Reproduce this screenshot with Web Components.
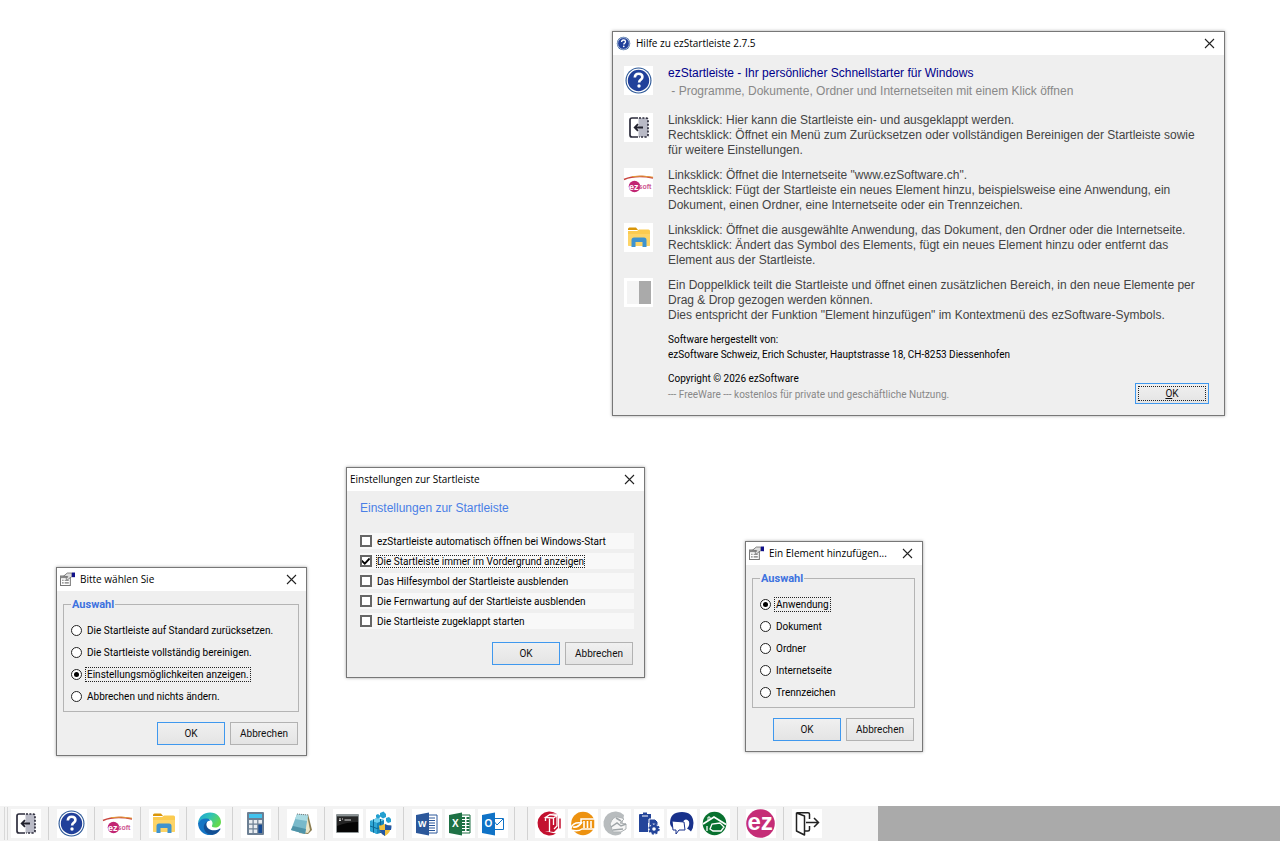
<!DOCTYPE html>
<html lang="de">
<head>
<meta charset="utf-8">
<title>ezStartleiste</title>
<style>
  html, body { margin: 0; min-height: 100vh; background: #fff; }
  body {
    --title: "Open Sans", "Noto Sans", sans-serif;
    --ui: Roboto, "Liberation Sans", sans-serif;
    --text: "Liberation Sans", Arial, sans-serif;
    font-family: var(--ui); font-size: 10px; line-height: 15px; color: #000;
  }
</style>
</head>
<body>
<ez-desktop>
  <ez-window style="left:612px;top:31px;width:611px" icon="help" caption="Hilfe zu ezStartleiste 2.7.5">
    <ez-help></ez-help>
  </ez-window>
  <ez-window style="left:346px;top:467px;width:297px" caption="Einstellungen zur Startleiste">
    <ez-settings heading="Einstellungen zur Startleiste" checked="1"
      options="ezStartleiste automatisch öffnen bei Windows-Start|Die Startleiste immer im Vordergrund anzeigen|Das Hilfesymbol der Startleiste ausblenden|Die Fernwartung auf der Startleiste ausblenden|Die Startleiste zugeklappt starten"></ez-settings>
    <ez-actions roomy></ez-actions>
  </ez-window>
  <ez-window style="left:56px;top:567px;width:249px" icon="form" caption="Bitte wählen Sie">
    <ez-radio-group legend="Auswahl" checked="2"
      options="Die Startleiste auf Standard zurücksetzen.|Die Startleiste vollständig bereinigen.|Einstellungsmöglichkeiten anzeigen.|Abbrechen und nichts ändern."></ez-radio-group>
    <ez-actions></ez-actions>
  </ez-window>
  <ez-window style="left:745px;top:541px;width:176px" icon="form" caption="Ein Element hinzufügen...">
    <ez-radio-group legend="Auswahl" checked="0" options="Anwendung|Dokument|Ordner|Internetseite|Trennzeichen"></ez-radio-group>
    <ez-actions></ez-actions>
  </ez-window>
  <ez-bar slot="bar"></ez-bar>
</ez-desktop>

<script>
const ICONS = {
  collapse: `<path d="M14.500 5h7.500q2 0 2 2v15q0 2-2 2h-7.500z" fill="#b9bac6"/><path d="M14 5H8Q6 5 6 7v15q0 2 2 2h6" fill="none" stroke="#2d2d3c" stroke-width="1.700"/><path d="M15 5h7q2 0 2 2v15q0 2-2 2h-7" fill="none" stroke="#2d2d3c" stroke-width="1.700" stroke-dasharray="2 1.400"/><path d="M19 14.500h-8M14 11.200l-3.300 3.300L14 17.800" fill="none" stroke="#22222e" stroke-width="1.800"/>`,
  help: `<circle cx="14.500" cy="14.500" r="13" fill="#2b5797"/><circle cx="14.500" cy="14.500" r="11.300" fill="#21409a" stroke="#fff" stroke-width="1.200"/><path d="M10.800 11.500q.2-3.700 3.900-3.700 3.700 0 3.700 3.200 0 1.600-1.600 2.700-1.600 1-1.700 2.800" fill="none" stroke="#fff" stroke-width="2.600"/><circle cx="15" cy="20" r="1.700" fill="#fff"/>`,
  ezsoft: `<path d="M0 11.500Q12 6.500 29 10" fill="none" stroke="#c8443d" stroke-width="1.500"/><path d="M8 8.600Q18 7.200 29 9.200" fill="none" stroke="#e39a3a" stroke-width="1"/><circle cx="10.500" cy="18.500" r="5.800" fill="#c22673"/><text x="5" y="21.500" font-family="Liberation Sans" font-size="9" font-weight="700" fill="#fff">ez</text><text x="14.500" y="21" font-family="Liberation Sans" font-size="7" font-weight="700" fill="#cf5a94">soft</text>`,
  folder: `<path d="M4 6q0-1.500 1.500-1.500H12l2 2.500H4z" fill="#d99508"/><path d="M4 8h9l2-1.500h9.500q1.500 0 1.500 1.500v13.500q0 1.500-1.500 1.500h-19Q4 23 4 21.500z" fill="#fbcb50"/><path d="M4 11h22v10.500q0 1.500-1.500 1.500h-19Q4 23 4 21.500z" fill="#fdd467"/><path d="M7.500 24v-7q0-2.500 2.500-2.500h10q2.500 0 2.500 2.500v7h-4v-5h-7v5z" fill="#3f93cf"/>`,
  edge: `<defs><linearGradient id="g" x1="0" y1="0" x2="1" y2=".5"><stop offset="0" stop-color="#1e9fd8"/><stop offset=".5" stop-color="#2fc2b8"/><stop offset="1" stop-color="#63d94f"/></linearGradient></defs><path d="M3 14C4 7 9 3.500 15 3.500c7 0 11 5 11 9.500 0 3.500-2.500 5.500-6 5.500-2.500 0-3.500-1-3-2 1.500-2.500 0-6-4-6.500-4-.4-8 1-10 4z" fill="url(#g)"/><path d="M3 14c2-4 6-5 9-4.500 2 .3 3 1.200 3.500 2-4 .5-5.500 3.500-4.500 7 1 3.500 4.500 6 8 7-8 2.500-16-3-16-11.500z" fill="#1475c4"/><path d="M12.500 12.500c-2 2-1 6 1.500 7.500 3 2 7.500 1.500 10.500-.3.800-.5 1.200 0 .8.700-2.300 4.200-6.500 5.800-9.800 5.100-5-1-7.500-5.500-6.500-9 .5-1.700 1.800-3.300 3.500-4z" fill="#124f94"/>`,
  calc: `<rect x="6" y="3" width="17" height="23" rx="1" fill="#6c7f93"/><rect x="8" y="5" width="13" height="4" fill="#42c3ee"/><g fill="#e8ecf0"><path d="M8 11h3.500v3.500H8zM12.700 11h3.500v3.500h-3.500zM17.400 11H21v3.500h-3.600zM8 15.700h3.500v3.500H8zM12.700 15.700h3.500v3.500h-3.500zM8 20.400h3.500V24H8zM12.700 20.400h3.500V24h-3.500z"/></g><path d="M17.400 15.700H21V24h-3.600z" fill="#164a93"/>`,
  note: `<path d="M21 5l4 16-4 4-9-1z" fill="#8b7d50"/><path d="M20 6l3 15-2 3-8-1z" fill="#eee5c6"/><path d="M10 5l11 1-3 19-14-4z" fill="#79b9ca"/><path d="M10 5l11 1-1 6-12-2z" fill="#aadbe3"/><path d="M6 17l13 3-1 5-14-4z" fill="#4f93a8"/><path d="M10 5l11 1" stroke="#777" stroke-dasharray="1 1"/>`,
  cmd: `<rect x="3" y="5" width="23" height="19" rx="1" fill="#8d9496"/><rect x="4" y="7.500" width="21" height="15.500" fill="#050505"/><path d="M4 8h21v5Q14 13 4 17z" fill="#252525"/><path d="M6 10h2m1 0h1m1.500 1H18M6 11.500h2" stroke="#ddd"/>`,
  reg: `<path d="M4 12l7-3 7 2v12l-7 2-7-3z" fill="#1886ba"/><path d="M4 12l7-3 7 2-7 3z" fill="#6ed0ef"/><path d="M11 14v11l-7-3V12z" fill="#2fa7d6"/><path d="M4 17l7 2.500 7-2M7.500 10.500v13M14.500 10v14" stroke="#0b6793" fill="none"/><path d="M14 4l3.500-1.500L20 5v3l-3 1.500-3-2zM20 9l3-1 2 2v3l-3 1-2-2zM10 6l2-1 2 1.500v2l-2 1-2-1z" fill="#24a0d0"/><path d="M18 15q-3 2-5 1.500 0 7 6 10.500 6-3.500 6-10.500-4 .5-7-1.500z" fill="#f0c040"/><path d="M19 15v6h6q.5-2 .5-4.500-4 0-6.500-1.500zM19 27v-6h-5.500q1.500 4 5.500 6z" fill="#2257a5"/>`,
  word: `<path d="M13 6h12v18H13z" fill="#fff" stroke="#2b579a"/><path d="M16 9h7m-7 2.500h7M16 14h7m-7 2.500h7M16 19h7m-7 2.500h7" stroke="#2b579a"/><path d="M4 6l13-2.500v23L4 24z" fill="#2b579a"/><text x="6" y="18" font-family="Liberation Sans" font-size="9" font-weight="700" fill="#fff">W</text>`,
  excel: `<path d="M13 6h12v18H13z" fill="#fff" stroke="#1e7145"/><path d="M17 9h3m1.500 0h3M17 12h3m1.500 0h3M17 15h3m1.500 0h3M17 18h3m1.500 0h3M17 21h3m1.500 0h3" stroke="#1e7145" stroke-width="2"/><path d="M4 6l13-2.500v23L4 24z" fill="#1e7145"/><text x="7" y="18" font-family="Liberation Sans" font-size="10" font-weight="700" fill="#fff">X</text>`,
  outlook: `<path d="M13 9.500h12.500v11H13z" fill="#fff" stroke="#0f72c6"/><path d="M15 11l4 5 6-6" stroke="#0f72c6" fill="none"/><path d="M4 6l13-2.500v23L4 24z" fill="#0f72c6"/><text x="6.500" y="18" font-family="Liberation Sans" font-size="10" font-weight="700" fill="#fff">O</text>`,
  shelf: `<path d="M21 24.500A12 12 0 1 1 22 5l-3-.5-4 .5-5 3v14l8 2z" fill="#c3112f"/><path d="M10 8l5-3 8 1v13l-4 4-9-1z" fill="#c3112f"/><path d="M10.500 8.500l4.500-3 7 1-3.500 2.500zM14.500 9v14M18.500 9v7M22 7v10l-3 3M10.500 9v3" fill="none" stroke="#fff" stroke-width="1.300"/><path d="M25 9.500v10" stroke="#c3112f" stroke-width="1.500"/>`,
  book: `<circle cx="15" cy="14.500" r="11.800" fill="#ed9210"/><path d="M3 19q2-6 10-5V10h14v10H14q-4 3-11 1z" fill="#ed9210" stroke="#fff" stroke-width="1.500"/><path d="M16 12v7M19.500 12v7M23 12v7M5 18q5 1 9-5" stroke="#fff" stroke-width="1.600" fill="none"/>`,
  people: `<path d="M20 25A12 12 0 1 1 23 6" fill="#b8bcbe"/><path d="M9 15q3-8 8-7t6 2l-4 4 6 1v5l-5 3-8 0z" fill="#f6f6f6" stroke="#aeb3b5"/><path d="M10 18l6-4 4 3 5-2M12 21l10-1M15 9l5 3" stroke="#9fa5a8" fill="none" stroke-width="1.500"/>`,
  clip: `<path d="M6 5h3V3.500h4V5h4v9h-3v9H5V6q0-1 1-1z" fill="#24459a"/><path d="M15 10h6l3 3v6h-9z" fill="#24459a" stroke="#fff"/><circle cx="20" cy="20" r="5" fill="#24459a" stroke="#fff"/><circle cx="20" cy="20" r="4.700" fill="none" stroke="#24459a" stroke-width="2" stroke-dasharray="2 1.700"/><circle cx="20" cy="20" r="1.800" fill="#fff"/><path d="M8 7h6" stroke="#fff"/>`,
  chat: `<path d="M3 14Q3 3 15 3q11 0 11.500 11 0 5-2.500 8.500-2-2-4-3 3-3 2-7-3-4-6 0-1 3 1 6H5q-2-2-2-4.500z" fill="#18318b"/><path d="M5 12l12 1 1 8h-6l-3 4v-4H6z" fill="#fff" stroke="#18318b"/>`,
  house: `<circle cx="14.500" cy="14.500" r="11.800" fill="#08712f"/><path d="M3 15L14 8l12 7.500" fill="none" stroke="#fff" stroke-width="1.800"/><path d="M7 17v5M10 20l2-5 8-1 4 4-3 4h-8z" fill="#08712f" stroke="#fff" stroke-width="1.300"/><path d="M8 11V8h2v2" stroke="#fff" fill="none"/>`,
  ez: `<circle cx="14.500" cy="14.500" r="14.300" fill="#c52d77"/><text x="1.500" y="20.500" font-family="Liberation Sans" font-size="24" font-weight="700" fill="#fff">ez</text>`,
  exit: `<path d="M4.500 4l8 3v19l-8-4zM5 3.800h11q1.500 0 1.500 1.500V10M13 22h3q1.500 0 1.500-1.500V17" fill="none" stroke="#222" stroke-width="1.500" stroke-linejoin="round"/><path d="M14 13.500h12.500M22 9l4.500 4.500L22 18" fill="none" stroke="#222" stroke-width="1.500"/>`,
  split: `<path d="M3 3h12v23H3z" fill="#f4f4f4"/><path d="M15 3h12v23H15z" fill="#aaa"/>`,
  form: `<path d="M1 8h19v18H1z" fill="#fff" stroke="#777" stroke-width="2"/><path d="M1 8h19v4H1z" fill="#888"/><path d="M4 16h3m2 0h8M4 21h3m2 0h8" stroke="#777" stroke-width="2"/><path d="M7 8l7-6h9v7l-5 3-4 4-2-3 3-4z" fill="#ddd" stroke="#666" stroke-width="1.500"/><path d="M23 1h6v9h-6z" fill="#11118a"/>`
};

class EzElement extends HTMLElement {
  connectedCallback() {
    if (!this.shadowRoot) this.attachShadow({ mode: "open" }).innerHTML = this.render();
  }
  attr(name) { return this.getAttribute(name) || ""; }
  options() { return this.attr("options").split("|"); }
}

customElements.define("ez-icon", class extends EzElement {
  render() {
    return `<style>:host{display:block;width:29px;height:29px;flex:none}svg{display:block;width:100%;height:100%;overflow:visible}</style>
      <svg viewBox="0 0 29 29" aria-hidden="true">${ICONS[this.attr("name")]}</svg>`;
  }
});

customElements.define("ez-desktop", class extends EzElement {
  render() {
    return `<style>
      :host{display:flex;flex-direction:column;min-height:100vh}
      main{position:relative;flex:1;min-height:760px}
      </style><main><slot></slot></main><slot name="bar"></slot>`;
  }
});

customElements.define("ez-window", class extends EzElement {
  render() {
    const icon = this.attr("icon");
    return `<style>
      :host{display:block;position:absolute;border:1px solid #777;background:#efefef;box-shadow:0 0 3px rgba(0,0,0,.35)}
      header{display:flex;align-items:center;gap:5px;height:23px;padding:0 9px 0 3px;background:#fff}
      h1{flex:1;margin:0;font:10px/15px var(--title);color:#000;white-space:nowrap}
      ez-icon{width:15px;height:15px}
      button{all:unset;display:block;width:11px;height:11px}
      svg{display:block}
      </style>
      <header>${icon ? `<ez-icon name="${icon}"></ez-icon>` : ""}<h1>${this.attr("caption")}</h1>
      <button type="button" aria-label="Schließen"><svg width="11" height="11" viewBox="0 0 11 11"><path d="M1 1l9 9M10 1l-9 9" stroke="#222" stroke-width="1.100"/></svg></button></header>
      <slot></slot>`;
  }
});

customElements.define("ez-button", class extends EzElement {
  render() {
    return `<style>
      :host{display:block;width:68px}
      button{display:flex;align-items:center;justify-content:center;box-sizing:border-box;width:100%;height:23px;padding:0;border:1px solid #b2b2b2;
        background:linear-gradient(#f0f0f0,#e4e4e4);font:inherit;color:#111}
      :host([primary]) button{border-color:#3f98ee}
      :host([focused]) button{height:21px;outline:1px dotted #222;outline-offset:-4px}
      </style><button type="button"><span><slot></slot></span></button>`;
  }
});

customElements.define("ez-actions", class extends EzElement {
  render() {
    return `<style>:host{display:flex;justify-content:flex-end;gap:5px;padding:10px 8px}:host([roomy]){padding:11px 11px 12px}</style>
      <ez-button primary>OK</ez-button><ez-button>Abbrechen</ez-button>`;
  }
});

customElements.define("ez-settings", class extends EzElement {
  render() {
    const on = +this.attr("checked");
    return `<style>
      :host{display:block;padding:9px 10px 2px 13px}
      h2{margin:0 0 17px;font:12px/16px var(--text);color:#4a7fe6}
      div{display:grid;gap:4px}
      label{display:flex;align-items:center;gap:4px;height:16px;background:#f8f8f8}
      input{appearance:none;flex:none;box-sizing:border-box;width:12px;height:12px;margin:0;border:2px solid #666;background:#fff}
      input:checked::before{content:"";display:block;width:8px;height:8px;background:#000;clip-path:polygon(0 35%,35% 65%,90% 5%,100% 30%,35% 100%,0 65%)}
      span{line-height:13px;padding:0 1px;white-space:nowrap}
      input:checked + span{outline:1px dotted #222;outline-offset:-1px}
      </style><h2>${this.attr("heading")}</h2><div>
      ${this.options().map((t, i) => `<label><input type="checkbox"${i === on ? " checked" : ""}><span>${t}</span></label>`).join("")}</div>`;
  }
});

customElements.define("ez-radio-group", class extends EzElement {
  render() {
    const on = +this.attr("checked");
    return `<style>
      :host{display:block;padding:6px 7px 0 6px}
      fieldset{margin:0;min-width:0;padding:7px 7px 4px;border:1px solid #b4b4b4}
      legend{padding:0 1px;margin:0;font-size:11px;font-weight:700;color:#3d72df;line-height:15px}
      label{display:flex;align-items:center;gap:4px;height:22px}
      input{appearance:none;display:grid;place-items:center;flex:none;box-sizing:border-box;width:11px;height:11px;margin:0;border:1px solid #222;border-radius:50%;background:#fff}
      input:checked::before{content:"";width:5px;height:5px;border-radius:50%;background:#000}
      span{line-height:13px;padding:0 1px;white-space:nowrap}
      input:checked + span{outline:1px dotted #222}
      </style><fieldset><legend>${this.attr("legend")}</legend>
      ${this.options().map((t, i) => `<label><input type="radio" name="choice"${i === on ? " checked" : ""}><span>${t}</span></label>`).join("")}</fieldset>`;
  }
});

customElements.define("ez-help-row", class extends EzElement {
  render() {
    return `<style>
      :host{display:flex;gap:15px;min-height:37px;font:12px/15px var(--text);color:#444;white-space:nowrap}
      ez-icon{background:#fff}
      </style><ez-icon name="${this.attr("icon")}"></ez-icon><div><slot></slot></div>`;
  }
});

customElements.define("ez-help", class extends EzElement {
  render() {
    return `<style>
      :host{display:block;padding:11px 15px 11px 11px}
      section{display:grid;gap:10px}
      p{margin:0;line-height:15px;white-space:pre}
      .lead{color:#00008b}.sub{color:#888;line-height:18px}
      ez-help-row .sub{line-height:20px}
      footer{display:flex;justify-content:space-between;align-items:flex-end;padding:9px 0 0 44px}
      .maker{margin-bottom:9px}
      ez-button{width:74px}
      u{text-underline-offset:1px}
      </style>
      <section>
      <ez-help-row icon="help"><p class="lead">ezStartleiste - Ihr persönlicher Schnellstarter für Windows</p><p class="sub"> - Programme, Dokumente, Ordner und Internetseiten mit einem Klick öffnen</p></ez-help-row>
      <ez-help-row icon="collapse">Linksklick: Hier kann die Startleiste ein- und ausgeklappt werden.<br>Rechtsklick: Öffnet ein Menü zum Zurücksetzen oder vollständigen Bereinigen der Startleiste sowie<br>für weitere Einstellungen.</ez-help-row>
      <ez-help-row icon="ezsoft">Linksklick: Öffnet die Internetseite "www.ezSoftware.ch".<br>Rechtsklick: Fügt der Startleiste ein neues Element hinzu, beispielsweise eine Anwendung, ein<br>Dokument, einen Ordner, eine Internetseite oder ein Trennzeichen.</ez-help-row>
      <ez-help-row icon="folder">Linksklick: Öffnet die ausgewählte Anwendung, das Dokument, den Ordner oder die Internetseite.<br>Rechtsklick: Ändert das Symbol des Elements, fügt ein neues Element hinzu oder entfernt das<br>Element aus der Startleiste.</ez-help-row>
      <ez-help-row icon="split">Ein Doppelklick teilt die Startleiste und öffnet einen zusätzlichen Bereich, in den neue Elemente per<br>Drag &amp; Drop gezogen werden können.<br>Dies entspricht der Funktion "Element hinzufügen" im Kontextmenü des ezSoftware-Symbols.</ez-help-row>
      </section>
      <footer><div><p class="maker">Software hergestellt von:<br>ezSoftware Schweiz, Erich Schuster, Hauptstrasse 18, CH-8253 Diessenhofen</p>
      <p>Copyright © 2026 ezSoftware</p><p class="sub">--- FreeWare --- kostenlos für private und geschäftliche Nutzung.</p></div>
      <ez-button primary focused><u>O</u>K</ez-button></footer>`;
  }
});

customElements.define("ez-bar", class extends EzElement {
  render() {
    const groups = [["collapse"], ["help"], ["ezsoft"], ["folder"], ["edge"], ["calc"], ["note"], ["cmd", "reg"],
      ["word", "excel", "outlook"], null, ["shelf", "book", "people", "clip", "chat", "house"], ["ez"], ["exit"]];
    const names = { collapse: "Einklappen", help: "Hilfe", ezsoft: "ezSoftware", folder: "Explorer", edge: "Edge", calc: "Rechner", note: "Editor",
      cmd: "Eingabeaufforderung", reg: "Registrierung", word: "Word", excel: "Excel", outlook: "Outlook", shelf: "Ordner", book: "Buchhaltung",
      people: "Adressen", clip: "Aufträge", chat: "Kontakt", house: "Immobilien", ez: "Fernwartung", exit: "Beenden" };
    return `<style>
      :host{display:flex;height:35px;background:#f3f3f3}
      nav{display:flex;align-items:center;padding:0 56px 0 4px}
      i{box-sizing:border-box;width:1px;height:33px;margin:0 8px 0 7px;background:#d2d2d2}
      i.grip{width:4px;margin:0 3px 0 0;border:solid #d8d8d8;border-width:0 1px;background:none}
      i.wide{width:14px;margin:0 7px 0 6px;border:solid #d2d2d2;border-width:0 1px;background:none}
      div{display:flex;gap:3px}
      button{display:grid;place-items:center start;width:30px;height:29px;padding:0;border:0;background:#fff}
      aside{flex:1;background:#aaa}
      </style><nav><i class="grip"></i>
      ${groups.map((g, k) => g === null ? `<i class="wide"></i>`
        : (k && groups[k - 1] ? "<i></i>" : "") + `<div>${g.map(n => `<button type="button" aria-label="${names[n]}"><ez-icon name="${n}"></ez-icon></button>`).join("")}</div>`).join("")}
      </nav><aside></aside>`;
  }
});
</script>
</body>
</html>
